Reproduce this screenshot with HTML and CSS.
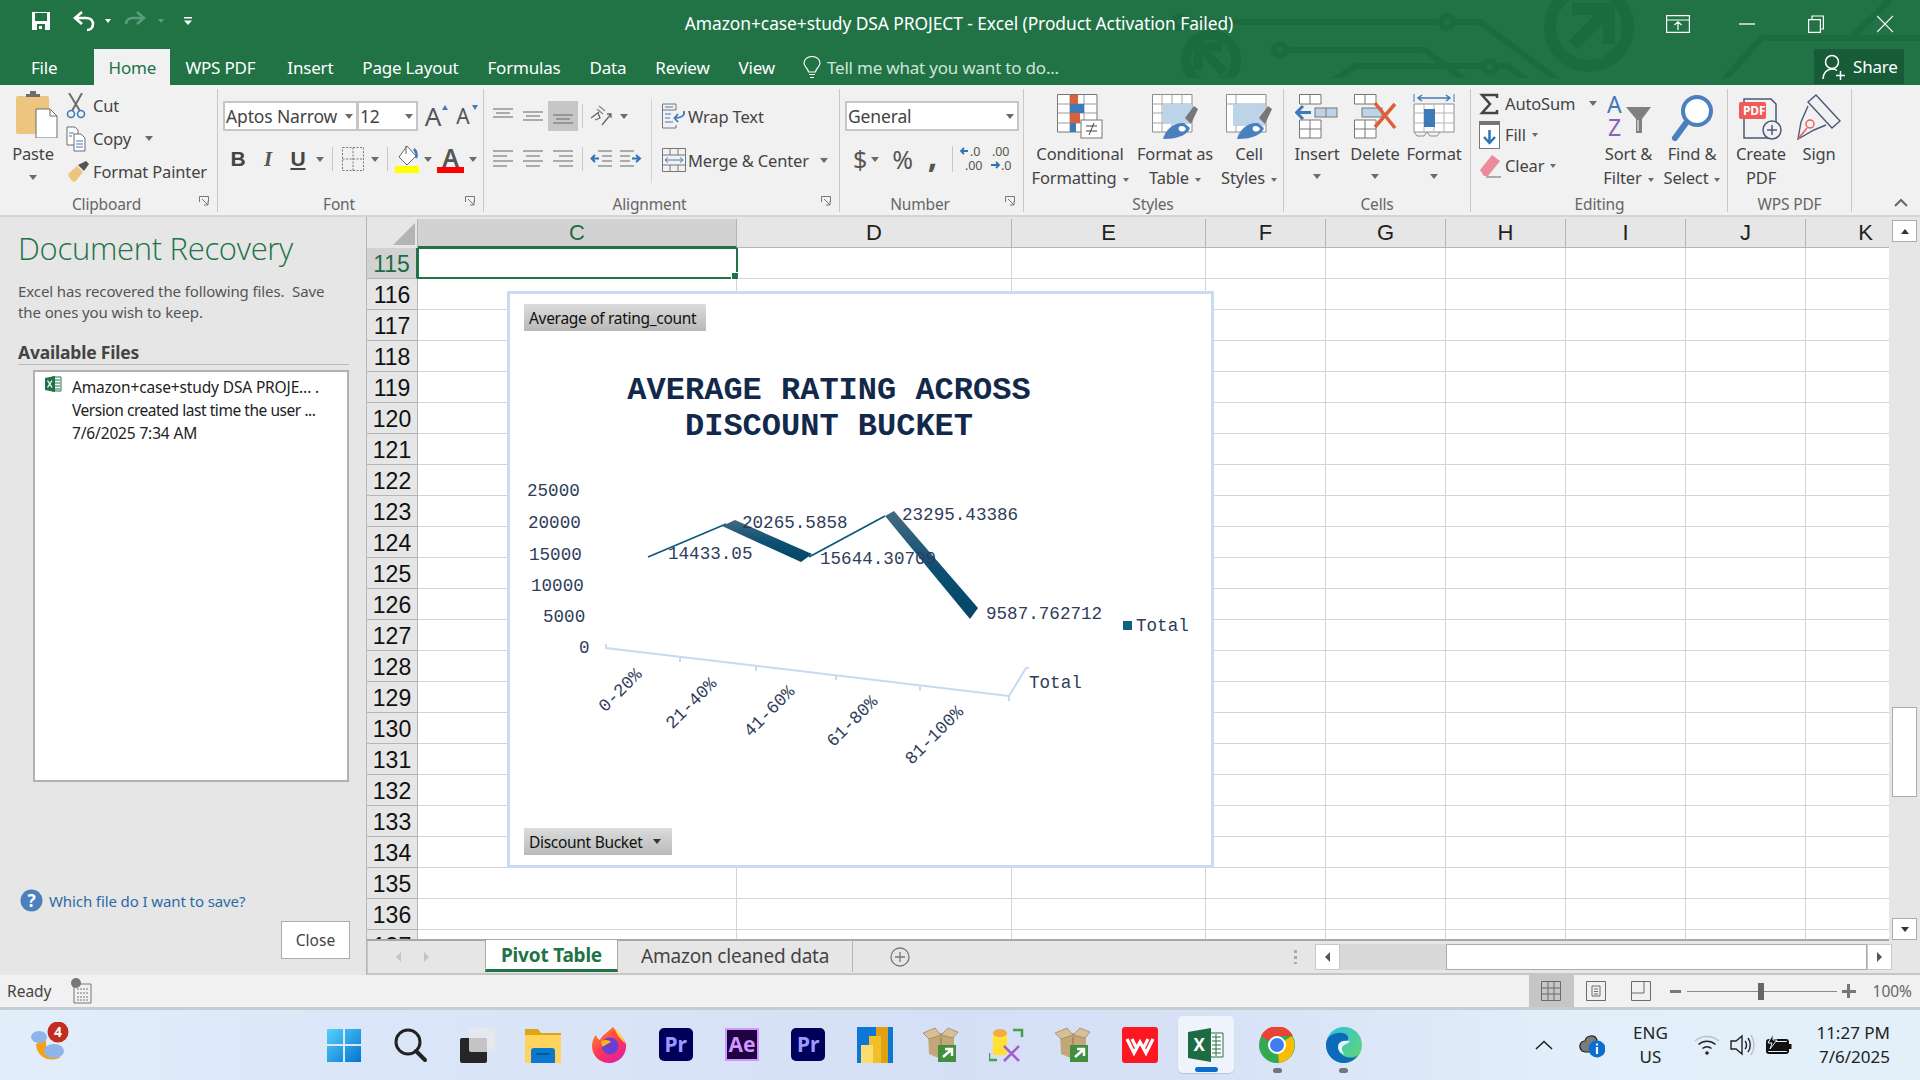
FILE: index.html
```html
<!DOCTYPE html>
<html lang="en">
<head>
<meta charset="utf-8">
<title>Amazon+case+study DSA PROJECT - Excel</title>
<link rel="stylesheet" href="styles.css">
</head>
<body>
<div class="app">
  <header class="head">
    <svg class="circuit" viewBox="0 0 1920 78" width="1920" height="78" fill="none" stroke="#1c6a40" stroke-width="6">
      <path d="M1188 22H1440M1455 22H1480L1563 84"/><circle cx="1447" cy="22" r="6"/><circle cx="1180" cy="22" r="6"/>
      <circle cx="1589" cy="27" r="39" stroke-width="12"/>
      <path d="M1573 45L1604 14M1572 9H1609V44" stroke-width="12"/>
      <path d="M1288 50H1425L1470 84"/><circle cx="1280" cy="50" r="6"/>
      <path d="M1328 84L1355 66H1484M1497 66H1507L1532 84"/><circle cx="1490" cy="67" r="6"/>
      <circle cx="1211" cy="60" r="25" stroke-width="10"/>
      <path d="M1224 72L1202 50M1198 70V47H1222" stroke-width="9"/>
      <path d="M1720 84L1762 38H1920M1851 38L1890 0"/>
    </svg>
    <div class="titlebar">
      <div class="qat">
        <svg width="20" height="20" viewBox="0 0 20 20"><path d="M1 1H19V19H1Z" fill="#fff"/><path d="M4 2H16V10H4ZM6 13H14V19H6Z" fill="#217346"/><path d="M8 15H11V18H8Z" fill="#fff"/></svg>
        <svg class="q-undo" width="24" height="22" viewBox="0 0 24 22" fill="none" stroke="#fff" stroke-width="2.6"><path d="M10 2L3 8L10 14M3 8H14C20 8 21 12 21 14C21 18 18 20 15 20"/></svg>
        <span class="caret white"></span>
        <svg class="q-redo" width="24" height="22" viewBox="0 0 24 22" fill="none" stroke="#5f9a7c" stroke-width="2.6"><path d="M14 2L21 8L14 14M21 8H10C4 8 3 12 3 14"/></svg>
        <span class="caret dim"></span>
        <svg class="q-cust" width="10" height="10" viewBox="0 0 10 10" fill="#fff"><path d="M1 1H9V2.4H1ZM1 4.5H9L5 9Z"/></svg>
      </div>
      <div class="doc-title">Amazon+case+study DSA PROJECT - Excel (Product Activation Failed)</div>
      <div class="winctl">
        <svg width="24" height="18" viewBox="0 0 24 18" fill="none" stroke="#fff" stroke-width="1.2"><path d="M.6.6H23.4V17.4H.6ZM.6 5H23.4M12 15V7M8.5 10L12 6.8L15.5 10"/></svg>
        <svg width="16" height="18" viewBox="0 0 16 18" stroke="#fff" stroke-width="1.3"><path d="M0 9H16"/></svg>
        <svg width="16" height="18" viewBox="0 0 16 18" fill="none" stroke="#fff" stroke-width="1.2"><path d="M.6 4.6H12.4V17.4H.6ZM4 4.6V1H15.4V14H12.4"/></svg>
        <svg width="16" height="18" viewBox="0 0 16 18" stroke="#fff" stroke-width="1.2"><path d="M0 1L16 17M16 1L0 17"/></svg>
      </div>
    </div>
    <nav class="tabs">
      <span class="tab t-file">File</span>
      <span class="tab t-home">Home</span>
      <span class="tab t-wps">WPS PDF</span>
      <span class="tab">Insert</span>
      <span class="tab">Page Layout</span>
      <span class="tab">Formulas</span>
      <span class="tab">Data</span>
      <span class="tab">Review</span>
      <span class="tab">View</span>
      <span class="tell">
        <svg width="18" height="23" viewBox="0 0 18 23" fill="none" stroke="#fff" stroke-width="1.2"><path d="M5.5 16C5 12 1 11 1 7A8 6.500 0 0 1 17 7C17 11 13 12 12.500 16ZM6 18.500H12M7 21.500H11"/></svg>
        <span>Tell me what you want to do...</span>
      </span>
      <span class="share">
        <svg width="24" height="28" viewBox="0 0 24 28" fill="none" stroke="#fff" stroke-width="1.5"><circle cx="10" cy="9" r="6.500"/><path d="M1 26C1 20 5 16 10 16C12 16 14 16.500 15 17.500M14 22.500H23M18.500 18V27"/></svg>
        <span>Share</span>
      </span>
    </nav>
  </header>

  <section class="ribbon">
    <div class="group g-clip">
      <div class="gbody">
        <div class="big paste">
          <div class="bicon"><svg width="42" height="47" viewBox="0 0 42 47"><rect x="0" y="5" width="33" height="38" rx="2" fill="#edc57e"/><path d="M10 6V3H14V0H20V3H24V6Z" fill="#6d6d6d"/><path d="M20 18H34L41 25V47H20Z" fill="#fff" stroke="#6d6d6d"/><path d="M34 18V25H41" fill="none" stroke="#6d6d6d"/></svg></div>
          <span class="blabel">Paste</span><span class="caret c-big"></span>
        </div>
        <div class="smalls">
          <div class="sm"><span class="si"><svg width="20" height="26" viewBox="0 0 20 26" fill="none"><path d="M3 0L14 18M16 0L6 18" stroke="#6e6e6e" stroke-width="2"/><circle cx="5" cy="21" r="3.500" stroke="#3f7ab8" stroke-width="1.6"/><circle cx="15" cy="21" r="3.500" stroke="#3f7ab8" stroke-width="1.6"/></svg></span>Cut</div>
          <div class="sm"><span class="si"><svg width="20" height="26" viewBox="0 0 20 26" fill="#fff" stroke="#6e6e6e"><path d="M1 1H9L12 4V19H1Z"/><path d="M8 8H15L19 12V25H8Z"/><path d="M3 7H8M3 10H6M10 15H17M10 18H17M10 21H17" stroke="#3f7ab8" fill="none"/></svg></span>Copy<span class="caret c-gap"></span></div>
          <div class="sm"><span class="si"><svg width="24" height="24" viewBox="0 0 24 24"><path d="M2 14L11 6L17 12L9 22C6 22 3 18 2 14Z" fill="#edc57e"/><path d="M12 5L18 11L23 4L20 1Z" fill="#555"/></svg></span>Format Painter</div>
        </div>
      </div>
      <div class="glabel">Clipboard</div>
      <svg class="launch" width="10" height="10" viewBox="0 0 10 10" fill="none" stroke="#777"><path d="M.5 6V.5H9.500V6"/><path d="M3 3L9 9M5 9H9V5"/></svg>
    </div>

    <div class="group g-font">
      <div class="gbody col">
        <div class="row r1">
          <div class="box b-name"><span>Aptos Narrow</span><span class="caret"></span></div>
          <div class="box b-size"><span>12</span><span class="caret"></span></div>
          <div class="tool t-a1"><span class="bigA">A</span><span class="tri up"></span></div>
          <div class="tool t-a2"><span class="smA">A</span><span class="tri down"></span></div>
        </div>
        <div class="row r2">
          <div class="tool"><b class="fb">B</b></div>
          <div class="tool"><i class="fi">I</i></div>
          <div class="tool"><span class="fu">U</span></div>
          <span class="cslot"><span class="caret"></span></span><span class="sepslot"></span>
          <div class="tool"><svg width="22" height="24" viewBox="0 0 22 24" fill="none" stroke="#777" stroke-dasharray="2 1.500"><path d="M.5.5H21.500V23.500H.5ZM11 .5V23.500M.5 12H21.500"/></svg></div>
          <span class="cslot"><span class="caret"></span></span><span class="sepslot"></span>
          <div class="tool t-fill"><svg width="24" height="28" viewBox="0 0 24 28"><path d="M12 1L21 11L12 20L4 12Z" fill="#fff" stroke="#666"/><path d="M11 1V9" stroke="#666"/><path d="M19 4C22 7 22 11 21 13" stroke="#3f7ab8" stroke-width="2.500" fill="none"/><rect y="21" width="24" height="7" fill="#ffff00"/></svg></div>
          <span class="cslot"><span class="caret"></span></span>
          <div class="tool t-fc"><span class="fc">A</span></div>
          <span class="cslot"><span class="caret"></span></span>
        </div>
      </div>
      <div class="glabel">Font</div>
      <svg class="launch" width="10" height="10" viewBox="0 0 10 10" fill="none" stroke="#777"><path d="M.5 6V.5H9.500V6"/><path d="M3 3L9 9M5 9H9V5"/></svg>
    </div>

    <div class="group g-align">
      <div class="gbody">
        <div class="col al-left">
          <div class="row r1">
            <div class="tool"><svg class="i20" viewBox="0 0 20 16" stroke="#666" stroke-width="1.200"><path d="M0 1H20M3 5H17M0 9H20"/></svg></div>
            <div class="tool"><svg class="i20" viewBox="0 0 20 16" stroke="#666" stroke-width="1.200"><path d="M0 4H20M3 8H17M0 12H20"/></svg></div>
            <div class="tool on"><svg class="i20" viewBox="0 0 20 16" stroke="#666" stroke-width="1.200"><path d="M0 7H20M3 11H17M0 15H20"/></svg></div>
            <span class="sepslot s8"></span>
            <div class="tool"><svg width="22" height="22" viewBox="0 0 22 22" fill="none" stroke="#666" stroke-width="1.300"><path d="M1 13L9 7M5 15L10 13L8 8M12 20L21 9M17 9H21V13"/><path d="M9 1L15 6M7 4L13 9" stroke="#888"/></svg></div>
            <span class="caret c-or"></span>
          </div>
          <div class="row r2">
            <div class="tool"><svg class="i20" viewBox="0 0 20 20" stroke="#666" stroke-width="1.200"><path d="M0 2H20M0 7H14M0 12H20M0 17H14"/></svg></div>
            <div class="tool"><svg class="i20" viewBox="0 0 20 20" stroke="#666" stroke-width="1.200"><path d="M0 2H20M3 7H17M0 12H20M3 17H17"/></svg></div>
            <div class="tool"><svg class="i20" viewBox="0 0 20 20" stroke="#666" stroke-width="1.200"><path d="M0 2H20M6 7H20M0 12H20M6 17H20"/></svg></div>
            <span class="sepslot s8"></span>
            <div class="tool"><svg width="22" height="20" viewBox="0 0 22 20" fill="none" stroke="#666" stroke-width="1.200"><path d="M8 2H22M12 7H22M12 12H22M8 17H22"/><path d="M9 9.500H2M5 6L1.500 9.500L5 13" stroke="#2f75b5" stroke-width="2"/></svg></div>
            <div class="tool"><svg width="22" height="20" viewBox="0 0 22 20" fill="none" stroke="#666" stroke-width="1.200"><path d="M0 2H14M0 7H10M0 12H10M0 17H14"/><path d="M12 9.500H20M16 6L20 9.500L16 13" stroke="#2f75b5" stroke-width="2"/></svg></div>
          </div>
        </div>
        <div class="col al-right">
          <div class="row r1 txt"><svg class="ai" width="24" height="26" viewBox="0 0 24 26" fill="none" stroke="#777"><path d="M.5 1H14V7H.5ZM.5 1V25H14V22"/><path d="M3 4H11M3 11H9M3 15H8M3 19H11" stroke="#3f7ab8"/><path d="M22 8C23 13 19 15 13 15M16 11L12.500 15L16 19" stroke="#3f7ab8" stroke-width="1.800"/></svg>Wrap Text</div>
          <div class="row r2 txt"><svg class="ai" width="24" height="24" viewBox="0 0 24 24" fill="none" stroke="#777"><path d="M.5.5H23.500V23.500H.5ZM.5 7H23.500M.5 17H23.500M8 .5V7M16 .5V7M8 17V23.500M16 17V23.500"/><path d="M3 12H21M6 9.500L3 12L6 14.500M18 9.500L21 12L18 14.500" stroke="#3f7ab8"/></svg>Merge &amp; Center<span class="caret c-merge"></span></div>
        </div>
      </div>
      <div class="glabel">Alignment</div>
      <svg class="launch" width="10" height="10" viewBox="0 0 10 10" fill="none" stroke="#777"><path d="M.5 6V.5H9.500V6"/><path d="M3 3L9 9M5 9H9V5"/></svg>
    </div>

    <div class="group g-num">
      <div class="gbody col">
        <div class="row r1"><div class="box b-gen"><span>General</span><span class="caret"></span></div></div>
        <div class="row r2 num-tools">
          <span class="nt dollar">$</span><span class="caret"></span>
          <span class="nt pct">%</span>
          <span class="nt comma">,</span>
          <span class="numsep"></span>
          <svg class="deci" width="28" height="32" viewBox="0 0 28 32"><path d="M8 9H1M4 6L1 9L4 12" stroke="#2f75b5" stroke-width="1.800" fill="none"/><text x="10" y="13.500" class="dec">.0</text><text x="5" y="27.500" class="dec">.00</text></svg>
          <svg class="deci dec2" width="28" height="32" viewBox="0 0 28 32"><text x="2" y="13.500" class="dec">.00</text><path d="M1 23H9M6 20L9 23L6 26" stroke="#2f75b5" stroke-width="1.800" fill="none"/><text x="11" y="27.500" class="dec">.0</text></svg>
        </div>
      </div>
      <div class="glabel">Number</div>
      <svg class="launch" width="10" height="10" viewBox="0 0 10 10" fill="none" stroke="#777"><path d="M.5 6V.5H9.500V6"/><path d="M3 3L9 9M5 9H9V5"/></svg>
    </div>

    <div class="group g-styles">
      <div class="gbody">
        <div class="big w96">
          <div class="bicon"><svg width="46" height="45" viewBox="0 0 46 45"><path d="M.5.5H40V38H.5Z" fill="#fff" stroke="#777"/><path d="M13 .5V38M27 .5V38M.5 10H40M.5 19H40M.5 29H40" stroke="#999"/><rect x="13" y="1" width="8" height="9" fill="#d9603b"/><rect x="13" y="10" width="14" height="9" fill="#3f7ab8"/><rect x="13" y="19" width="10" height="10" fill="#d9603b"/><rect x="13" y="29" width="6" height="9" fill="#3f7ab8"/><rect x="24" y="26" width="21" height="18" fill="#fff" stroke="#777"/><path d="M29 32H40M29 37H40M37 29L32 41" stroke="#444" fill="none"/></svg></div>
          <span class="blabel">Conditional</span><span class="blabel">Formatting<span class="caret c-in"></span></span>
        </div>
        <div class="big w94">
          <div class="bicon"><svg width="46" height="45" viewBox="0 0 46 45"><path d="M.5.5H40V38H.5Z" fill="#fff" stroke="#8c8c8c"/><path d="M.5 10H40M.5 19H40M.5 29H40M10 .5V38M20 .5V38M30 .5V38" stroke="#a5a5a5"/><rect x="11" y="10" width="29" height="20" fill="#bdd3e8"/><path d="M33 24L42 12L46 15L39 30Z" fill="#777"/><path d="M11 45C13 36 22 28 32 29L38 34C36 40 28 45 11 45Z" fill="#4a80bd"/><path d="M27 33C29 31 33 32 34 35C31 40 25 37 27 33Z" fill="#fff"/></svg></div>
          <span class="blabel">Format as</span><span class="blabel">Table<span class="caret c-in"></span></span>
        </div>
        <div class="big w54">
          <div class="bicon"><svg width="46" height="45" viewBox="0 0 46 45"><path d="M.5.5H40V38H.5Z" fill="#fff" stroke="#8c8c8c"/><path d="M.5 10H40M10 .5V38" stroke="#a5a5a5"/><rect x="7" y="10" width="32" height="22" fill="#bdd3e8"/><path d="M33 24L42 12L46 15L39 30Z" fill="#777"/><path d="M11 45C13 36 22 28 32 29L38 34C36 40 28 45 11 45Z" fill="#4a80bd"/><path d="M27 33C29 31 33 32 34 35C31 40 25 37 27 33Z" fill="#fff"/></svg></div>
          <span class="blabel">Cell</span><span class="blabel">Styles<span class="caret c-in"></span></span>
        </div>
      </div>
      <div class="glabel">Styles</div>
    </div>

    <div class="group g-cells">
      <div class="gbody">
        <div class="big w58">
          <div class="bicon"><svg width="44" height="45" viewBox="0 0 44 45" fill="none"><path d="M4.500.5H26V10H4.500ZM15 .5V10M4.500 26H26V44H4.500ZM15 26V44M4.500 35H26" stroke="#777" fill="#fff"/><rect x="20" y="14" width="22" height="9" fill="#bdd3e8" stroke="#777"/><path d="M31 14V23" stroke="#777"/><path d="M16 18.500H2M8 12L1.500 18.500L8 25" stroke="#3f7ab8" stroke-width="3"/></svg></div>
          <span class="blabel">Insert</span><span class="caret c-line"></span>
        </div>
        <div class="big w58">
          <div class="bicon"><svg width="44" height="45" viewBox="0 0 44 45" fill="none"><path d="M1.500.5H23V10H1.500ZM12 .5V10M1.500 26H23V44H1.500ZM12 26V44M1.500 35H23" stroke="#777" fill="#fff"/><rect x="9" y="14" width="20" height="9" fill="#bdd3e8" stroke="#777"/><path d="M22 9L42 34M42 10L22 33" stroke="#d9603b" stroke-width="3.500"/></svg></div>
          <span class="blabel">Delete</span><span class="caret c-line"></span>
        </div>
        <div class="big w60">
          <div class="bicon"><svg width="42" height="45" viewBox="0 0 42 45" fill="none"><path d="M1 0V8M41 0V8" stroke="#3f7ab8"/><path d="M5 4H37M9 1L5 4L9 7M33 1L37 4L33 7" stroke="#3f7ab8" stroke-width="1.500"/><path d="M1 10H41V38H1Z" fill="#fff" stroke="#8c8c8c"/><path d="M11 10V38M31 10V38M21 10V38M1 19H41M1 29H41" stroke="#b5b5b5"/><rect x="11" y="15" width="11" height="18" fill="#3f7ab8"/><path d="M1 38L4 42H11L14 38M14 38L17 42H24L27 38" stroke="#8c8c8c"/></svg></div>
          <span class="blabel">Format</span><span class="caret c-line"></span>
        </div>
      </div>
      <div class="glabel">Cells</div>
    </div>

    <div class="group g-edit">
      <div class="gbody">
        <div class="smalls ed">
          <div class="sm"><span class="si"><svg width="20" height="22" viewBox="0 0 20 22" fill="none" stroke="#444" stroke-width="2.500"><path d="M18 5V2H3L11 11L3 20H18V17"/></svg></span>AutoSum<span class="caret c-auto"></span></div>
          <div class="sm"><span class="si"><svg width="21" height="28" viewBox="0 0 21 28"><rect x=".5" y=".5" width="20" height="27" fill="#fff" stroke="#777"/><rect width="21" height="4" fill="#777"/><path d="M10.500 9V22M5 16L10.500 22L16 16" fill="none" stroke="#2f75b5" stroke-width="2.500"/></svg></span>Fill<span class="caret c-in"></span></div>
          <div class="sm"><span class="si"><svg width="22" height="24" viewBox="0 0 22 24"><path d="M1 16L13 1L21 7L9 22H5Z" fill="#ea8c9b"/><path d="M7 23H22" stroke="#666"/></svg></span>Clear<span class="caret c-in"></span></div>
        </div>
        <div class="big w65">
          <div class="bicon"><svg class="sorticon" width="44" height="58" viewBox="0 -7 44 58"><text x="0" y="19" class="az a">A</text><text x="1" y="42" class="az z">Z</text><path d="M19 13H44L35 25V39H29V25Z" fill="#808080"/><path d="M31 26V37" stroke="#fff"/></svg></div>
          <span class="blabel">Sort &amp;</span><span class="blabel">Filter<span class="caret c-in"></span></span>
        </div>
        <div class="big w62">
          <div class="bicon"><svg width="42" height="48" viewBox="0 0 42 48" fill="none"><circle cx="26" cy="17" r="14" stroke="#4a80bd" stroke-width="4" fill="#fff"/><path d="M15 29L4 44" stroke="#4a80bd" stroke-width="6" stroke-linecap="round"/></svg></div>
          <span class="blabel">Find &amp;</span><span class="blabel">Select<span class="caret c-in"></span></span>
        </div>
      </div>
      <div class="glabel">Editing</div>
    </div>

    <div class="group g-wps">
      <div class="gbody">
        <div class="big w58">
          <div class="bicon"><svg width="44" height="46" viewBox="0 0 44 46" fill="none"><path d="M5 5H32L37 10V44H5Z" stroke="#4a5a78" stroke-width="1.500"/><rect x="0" y="8" width="27" height="17" rx="2" fill="#ee5b5b"/><text x="4" y="21" class="pdf">PDF</text><circle cx="33" cy="36" r="9" fill="#f1f1f1" stroke="#4a5a78" stroke-width="1.500"/><path d="M28 36H38M33 31V41" stroke="#4a5a78" stroke-width="1.500"/></svg></div>
          <span class="blabel">Create</span><span class="blabel">PDF</span>
        </div>
        <div class="big w58">
          <div class="bicon"><svg width="44" height="46" viewBox="0 0 44 46" fill="none" stroke="#4a5a78" stroke-width="1.400"><path d="M19 1L43 27L35 34L11 8ZM11 12L4 28L1 45L17 36L29 31"/><path d="M1 45L10 34" stroke="#e85a5a"/><circle cx="13" cy="30" r="4" stroke="#e85a5a"/></svg></div>
          <span class="blabel">Sign</span>
        </div>
      </div>
      <div class="glabel">WPS PDF</div>
    </div>
    <div class="collapse"><svg width="16" height="10" viewBox="0 0 16 10" fill="none" stroke="#666" stroke-width="2"><path d="M2 9L8 3L14 9"/></svg></div>
  </section>

  <main class="main">
    <aside class="pane">
      <h1>Document Recovery</h1>
      <p>Excel has recovered the following files.&nbsp; Save<br>the ones you wish to keep.</p>
      <h2>Available Files</h2>
      <div class="files">
        <svg width="17" height="16" viewBox="0 0 17 16"><path d="M7 1H16V15H7Z" fill="#fff" stroke="#217346"/><path d="M9 4H15M9 7H15M9 10H15M9 13H15" stroke="#217346"/><path d="M0 2L10 0V16L0 14Z" fill="#217346"/><path d="M2.500 4.500L7 11.500M7 4.500L2.500 11.500" stroke="#fff" stroke-width="1.300"/></svg>
        <div class="file-text"><div>Amazon+case+study DSA PROJE... .</div><div class="fl2">Version created last time the user ...</div><div>7/6/2025 7:34 AM</div></div>
      </div>
      <div class="help"><svg width="23" height="23" viewBox="0 0 23 23"><circle cx="11.500" cy="11.500" r="11" fill="#4a80bd"/><text x="11.500" y="18" text-anchor="middle" class="q">?</text></svg><span>Which file do I want to save?</span></div>
      <div class="close-btn">Close</div>
    </aside>

    <div class="work">
      <div class="sheet-row">
        <div class="sheet">
          <div class="colhead">
            <div class="corner"><span></span></div>
            <div class="ch c1 sel">C</div><div class="ch c2">D</div><div class="ch c3">E</div><div class="ch c4">F</div><div class="ch c4">G</div><div class="ch c4">H</div><div class="ch c4">I</div><div class="ch c4">J</div><div class="ch c4">K</div>
          </div>
          <div class="rows">
            <div class="r"><div class="rh sel">115</div><div class="cells"><div class="active"></div></div></div>
            <div class="r"><div class="rh">116</div><div class="cells"></div></div>
            <div class="r"><div class="rh">117</div><div class="cells"></div></div>
            <div class="r"><div class="rh">118</div><div class="cells"></div></div>
            <div class="r"><div class="rh">119</div><div class="cells"></div></div>
            <div class="r"><div class="rh">120</div><div class="cells"></div></div>
            <div class="r"><div class="rh">121</div><div class="cells"></div></div>
            <div class="r"><div class="rh">122</div><div class="cells"></div></div>
            <div class="r"><div class="rh">123</div><div class="cells"></div></div>
            <div class="r"><div class="rh">124</div><div class="cells"></div></div>
            <div class="r"><div class="rh">125</div><div class="cells"></div></div>
            <div class="r"><div class="rh">126</div><div class="cells"></div></div>
            <div class="r"><div class="rh">127</div><div class="cells"></div></div>
            <div class="r"><div class="rh">128</div><div class="cells"></div></div>
            <div class="r"><div class="rh">129</div><div class="cells"></div></div>
            <div class="r"><div class="rh">130</div><div class="cells"></div></div>
            <div class="r"><div class="rh">131</div><div class="cells"></div></div>
            <div class="r"><div class="rh">132</div><div class="cells"></div></div>
            <div class="r"><div class="rh">133</div><div class="cells"></div></div>
            <div class="r"><div class="rh">134</div><div class="cells"></div></div>
            <div class="r"><div class="rh">135</div><div class="cells"></div></div>
            <div class="r"><div class="rh">136</div><div class="cells"></div></div>
            <div class="r"><div class="rh">137</div><div class="cells"></div></div>
          </div>
          <div class="chart">
            <svg class="plot" viewBox="505 288 711 582" width="711" height="582">
              <defs>
                <linearGradient id="rib" x1="0" y1="0" x2="0" y2="1"><stop offset="0" stop-color="#456a83"/><stop offset=".55" stop-color="#0b4f72"/><stop offset="1" stop-color="#044766"/></linearGradient>
              </defs>
              <text class="ct" x="829" y="399" text-anchor="middle">AVERAGE RATING ACROSS</text>
              <text class="ct" x="829" y="435" text-anchor="middle">DISCOUNT BUCKET</text>
              <g class="ax">
                <text x="527" y="496">25000</text><text x="528" y="528">20000</text><text x="529" y="560">15000</text><text x="531" y="591">10000</text><text x="543" y="622">5000</text><text x="579" y="653">0</text>
              </g>
              <path d="M648 557L726 524" stroke="#0e5a7c" stroke-width="1.800" fill="none"/>
              <path d="M809 557L885 516" stroke="#0e5a7c" stroke-width="1.800" fill="none"/>
              <path d="M722 526L735 520L812 554L801 562Z" fill="url(#rib)"/>
              <path d="M885 516L894 511L978 608L970 619Z" fill="url(#rib)"/>
              <g class="ax">
                <text x="742" y="528">20265.5858</text><text x="668" y="559">14433.05</text><text x="820" y="564">15644.30709</text><text x="902" y="520">23295.43386</text><text x="986" y="619">9587.762712</text><text x="1136" y="631">Total</text><text x="1029" y="688">Total</text>
              </g>
              <rect x="1123" y="621" width="9" height="9" fill="#125f85"/>
              <path d="M606 644V648L1009 696M680 657V662M756 666V671M836 675V680M920 686V691M1009 696V701M1009 696L1026 668H1029" stroke="#c6daf1" stroke-width="2" fill="none"/>
              <g class="ax rot">
                <text transform="translate(624 694) rotate(-45)" text-anchor="middle">0-20%</text>
                <text transform="translate(695 707) rotate(-45)" text-anchor="middle">21-40%</text>
                <text transform="translate(773 715) rotate(-45)" text-anchor="middle">41-60%</text>
                <text transform="translate(856 725) rotate(-45)" text-anchor="middle">61-80%</text>
                <text transform="translate(938 739) rotate(-45)" text-anchor="middle">81-100%</text>
              </g>
            </svg>
            <div class="fbtn f-avg">Average of rating_count</div>
            <div class="fbtn">Discount Bucket<span class="caret c-fb"></span></div>
          </div>
        </div>
        <div class="vscroll">
          <div class="sb-btn"><span class="caret up"></span></div>
          <div class="sb-track"><div class="sb-thumb"></div></div>
          <div class="sb-btn"><span class="caret"></span></div>
        </div>
      </div>
      <div class="sheetbar">
        <span class="nav"><span class="tri-l"></span><span class="tri-r"></span></span>
        <span class="stab on">Pivot Table</span>
        <span class="stab">Amazon cleaned data</span>
        <svg class="plus" width="20" height="20" viewBox="0 0 20 20" fill="none" stroke="#777" stroke-width="1.300"><circle cx="10" cy="10" r="9"/><path d="M5 10H15M10 5V15"/></svg>
        <span class="dots"></span>
        <div class="hscroll">
          <div class="sb-h"><span class="tri-l dark"></span></div>
          <div class="h-track"></div>
          <div class="h-thumb"></div>
          <div class="sb-h"><span class="tri-r dark"></span></div>
        </div>
      </div>
    </div>
  </main>

  <footer class="status">
    <span class="ready">Ready</span>
    <svg class="macro" width="22" height="26" viewBox="0 0 22 26" fill="none" stroke="#777"><path d="M4 6H21V25H4Z"/><path d="M7 11H18M7 15H18M7 19H18M7 22H18" stroke-dasharray="2 1"/><circle cx="6" cy="5" r="5" fill="#777" stroke="none"/></svg>
    <div class="views">
      <span class="vw on"><svg width="20" height="20" viewBox="0 0 20 20" fill="none" stroke="#6b6b6b"><path d="M.5.5H19.500V19.500H.5ZM7 .5V19.500M13 .5V19.500M.5 7H19.500M.5 13H19.500"/></svg></span>
      <span class="vw"><svg width="20" height="20" viewBox="0 0 20 20" fill="none" stroke="#6b6b6b"><path d="M.5.5H19.500V19.500H.5ZM6 5H14V15H6ZM8 8H12M8 10.500H12M8 13H12"/></svg></span>
      <span class="vw"><svg width="20" height="20" viewBox="0 0 20 20" fill="none" stroke="#6b6b6b"><path d="M.5.5H19.500V19.500H.5ZM.5 12H13V.5"/></svg></span>
    </div>
    <div class="zoom">
      <span class="zm"></span>
      <span class="slider"><span class="knob"></span></span>
      <span class="zp"></span>
      <span class="pct100">100%</span>
    </div>
  </footer>

  <div class="taskbar">
    <div class="weather">
      <svg width="44" height="42" viewBox="0 0 44 42"><path d="M7 22C7 34 20 42 32 35C22 34 16 29 17 18Z" fill="#f3a31b"/><ellipse cx="10" cy="15" rx="8" ry="6" fill="#8fb4ea"/><ellipse cx="25" cy="29" rx="10" ry="7" fill="#8fb4ea"/><circle cx="29" cy="10" r="10.500" fill="#c12d1e"/><text x="29" y="15" text-anchor="middle" class="badge">4</text></svg>
    </div>
    <div class="apps">
      <span class="ti"><svg width="36" height="36" viewBox="0 0 36 36"><defs><linearGradient id="w" x1="0" y1="0" x2="1" y2="1"><stop offset="0" stop-color="#56d0fb"/><stop offset="1" stop-color="#0474d0"/></linearGradient></defs><path d="M1 2H17V17H1ZM19 2H35V17H19ZM1 19H17V35H1ZM19 19H35V35H19Z" fill="url(#w)"/></svg></span>
      <span class="ti"><svg width="36" height="36" viewBox="0 0 36 36" fill="none" stroke="#222" stroke-width="3"><circle cx="16" cy="15" r="12"/><path d="M24 24L33 33" stroke-width="4" stroke-linecap="round"/></svg></span>
      <span class="ti"><svg width="36" height="36" viewBox="0 0 36 36"><rect x="1" y="11" width="27" height="25" rx="2" fill="#262626"/><rect x="10" y="1" width="26" height="24" rx="2" fill="#e8e8ea" fill-opacity=".82"/></svg></span>
      <span class="ti"><svg width="38" height="36" viewBox="0 0 38 36"><path d="M1 2H14L17 6H37V36H1Z" fill="#e0a416"/><path d="M1 8H37V36H1Z" fill="#fed45f"/><path d="M7 24Q7 21 10 21H28Q31 21 31 24V36H7Z" fill="#0a78cc"/><path d="M12 27H26" stroke="#054f90" stroke-width="1.500"/></svg></span>
      <span class="ti"><svg width="36" height="38" viewBox="0 0 36 38"><defs><linearGradient id="ff" x1="0" y1="0" x2=".6" y2="1"><stop offset="0" stop-color="#ff9a1f"/><stop offset=".6" stop-color="#ff3750"/><stop offset="1" stop-color="#e6219a"/></linearGradient></defs><path d="M22 1C24 5 31 9 35 18C36 29 28 37 18 37C8 37 1 29 1 20C1 15 3 11 5 9C6 12 7 13 9 14C11 9 16 7 22 1Z" fill="url(#ff)"/><path d="M24 2C27 6 33 11 34 18C32 14 26 12 24 2Z" fill="#ffd43a"/><circle cx="19" cy="20" r="8.500" fill="#6b3fd4"/><path d="M10 15C14 13 19 14 20 16L11 21Z" fill="#ffb01f"/></svg></span>
      <span class="ti"><span class="adobe pr">Pr</span></span>
      <span class="ti"><span class="adobe ae">Ae</span></span>
      <span class="ti"><span class="adobe pr">Pr</span></span>
      <span class="ti"><svg width="36" height="36" viewBox="0 0 36 36"><rect width="36" height="36" fill="#0a78d4"/><rect x="19" width="12" height="36" fill="#e0a010"/><rect x="31" width="5" height="36" fill="#0a78d4"/><rect x="12" y="9" width="12" height="27" fill="#f1bf2a"/><rect x="4" y="18" width="12" height="18" fill="#fbdd6d"/></svg></span>
      <span class="ti"><svg width="36" height="36" viewBox="0 0 36 36"><path d="M5 6H31V28L18 32L6 27Z" fill="#c4a778"/><path d="M18 10V32" stroke="#8a7350"/><path d="M0 6L12 1L18 8L6 12ZM18 8L25 1L35 5L30 11Z" fill="#d9bf95" stroke="#8a7350" stroke-width=".6"/><rect x="15" y="18" width="18" height="17" fill="#3f8f3f"/><path d="M20 30L28 23M22 22H29V29" stroke="#fff" stroke-width="2.500" fill="none"/></svg></span>
      <span class="ti"><svg width="36" height="36" viewBox="0 0 36 36"><path d="M4 6H18V28H4Z" fill="#ffe033"/><ellipse cx="11" cy="6" rx="7" ry="4" fill="#f2ab4a"/><path d="M24 3H33V10M0 26V33H8" fill="none" stroke="#46a046" stroke-width="2.500"/><path d="M15 19L30 34M30 19L15 34" stroke="#a45dd1" stroke-width="2.500"/></svg></span>
      <span class="ti"><svg width="36" height="36" viewBox="0 0 36 36"><path d="M5 6H31V28L18 32L6 27Z" fill="#c4a778"/><path d="M18 10V32" stroke="#8a7350"/><path d="M0 6L12 1L18 8L6 12ZM18 8L25 1L35 5L30 11Z" fill="#d9bf95" stroke="#8a7350" stroke-width=".6"/><rect x="15" y="18" width="18" height="17" fill="#3f8f3f"/><path d="M20 30L28 23M22 22H29V29" stroke="#fff" stroke-width="2.500" fill="none"/></svg></span>
      <span class="ti"><svg width="36" height="36" viewBox="0 0 36 36"><rect width="36" height="36" rx="3" fill="#fc1723"/><path d="M5 12L12 26L18 15L24 26L31 12M10 12L14 20M26 12L22 20" stroke="#fff" stroke-width="3.200" fill="none"/></svg></span>
      <span class="ti active-app"><svg width="36" height="34" viewBox="0 0 36 34"><path d="M22 5H35V29H22Z" fill="#fff" stroke="#217346"/><path d="M24 9H33M24 13H33M24 17H33M24 21H33M24 25H33M28 6V28" stroke="#217346"/><path d="M0 4L23 0V34L0 30Z" fill="#1d6b41"/><text x="5.500" y="23" class="xl">X</text></svg><span class="pill"></span></span>
      <span class="ti dotted t-chrome"><svg width="36" height="36" viewBox="0 0 36 36"><circle cx="18" cy="18" r="18" fill="#34a853"/><path d="M18 18L33 9A18 18 0 0 1 20 36Z" fill="#fbbc04"/><path d="M2 9A18 18 0 0 1 34 9H18A9 9 0 0 0 10 14Z" fill="#ea4335"/><circle cx="18" cy="18" r="9" fill="#fff"/><circle cx="18" cy="18" r="7" fill="#3f7ef0"/></svg><span class="dot"></span></span>
      <span class="ti dotted"><svg width="36" height="36" viewBox="0 0 36 36"><defs><linearGradient id="eg" x1="0" y1="0" x2="1" y2="1"><stop offset="0" stop-color="#2fc0e0"/><stop offset="1" stop-color="#62d96b"/></linearGradient></defs><circle cx="18" cy="18" r="18" fill="url(#eg)"/><path d="M0 18C0 8 10 5 16 6C26 7 22 17 18 17C13 17 11 22 15 27C19 31 27 32 32 28C28 34 22 36 18 36C8 36 0 28 0 18Z" fill="#0c6bb8"/><path d="M12 20C12 14 18 13 24 14C22 17 19 17 17 19C15 21 16 25 19 27C15 27 12 24 12 20Z" fill="#e8f2fb"/></svg><span class="dot"></span></span>
    </div>
    <div class="tray">
      <svg class="tr-caret" width="18" height="10" viewBox="0 0 18 10" fill="none" stroke="#222" stroke-width="1.600"><path d="M1 9L9 1.500L17 9"/></svg>
      <svg class="tr-cloud" width="26" height="26" viewBox="0 0 26 26"><path d="M3 19C-1 15 1 9 6 9C7 3 16 2 18 8L12 20H6Z" fill="#7b7b7b" stroke="#222" stroke-width="1.200"/><circle cx="18" cy="17" r="8.500" fill="#0a6ed1"/><path d="M18 15V22M18 11.500V13.500" stroke="#fff" stroke-width="2.200"/></svg>
      <div class="lang">ENG<br>US</div>
      <svg class="tr-wifi" width="26" height="22" viewBox="0 0 26 22" fill="none" stroke="#222" stroke-width="1.500"><path d="M1 7A18 18 0 0 1 25 7" stroke="#b8c2cc"/><path d="M4.500 10.500A13 13 0 0 1 21.500 10.500M8.500 14.500A7 7 0 0 1 17.500 14.500"/><circle cx="13" cy="19" r="1.800" fill="#222" stroke="none"/></svg>
      <svg class="tr-vol" width="26" height="22" viewBox="0 0 26 22" fill="none" stroke="#222" stroke-width="1.400"><path d="M1 7H6L12 2V20L6 15H1ZM15 7C17 9 17 13 15 15M18 4C21 8 21 14 18 18"/><path d="M21 1C25 7 25 15 21 21" stroke="#b8c2cc"/></svg>
      <svg class="tr-bat" width="26" height="22" viewBox="0 0 26 22"><rect x="1" y="6" width="21" height="13" rx="2" fill="none" stroke="#111" stroke-width="2"/><rect x="2" y="8" width="19" height="9" fill="#111"/><rect x="22.500" y="10" width="3" height="5" fill="#111"/><path d="M7 0L2 9H6L4 15L11 6H7Z" fill="#111" stroke="#e2edf8"/></svg>
      <div class="clock">11:27 PM<br>7/6/2025</div>
    </div>
  </div>
</div>
</body>
</html>
```

FILE: styles.css
```css
* { box-sizing: border-box; }
html, body { margin: 0; padding: 0; }
body { font-family: "Noto Sans", "Open Sans", sans-serif; color: #444; overflow: hidden; background: #fff; }
.app { width: 1920px; height: 1080px; display: flex; flex-direction: column; overflow: hidden; }
svg { display: block; flex: none; }

/* carets */
.caret { display: inline-block; flex: none; width: 0; height: 0; border-left: 4.5px solid transparent; border-right: 4.5px solid transparent; border-top: 5px solid #6b6b6b; }
.caret.up { border-top: 0; border-bottom: 5px solid #6b6b6b; }
.caret.white { border-top-color: #fff; border-left-width: 3.5px; border-right-width: 3.5px; border-top-width: 4px; }
.caret.dim { border-top-color: #5f9a7c; border-left-width: 3.5px; border-right-width: 3.5px; border-top-width: 4px; }

/* head */
.head { height: 85px; background: #217346; position: relative; color: #fff; }
.circuit { position: absolute; left: 0; top: 0; }
.titlebar { height: 49px; display: grid; grid-template-columns: 1fr auto 1fr; align-items: start; position: relative; }
.qat { display: flex; align-items: center; padding: 0 0 0 31px; height: 42px; }
.q-undo { margin-left: 21px; }
.qat .caret.white { margin-left: 9px; }
.q-redo { margin-left: 12px; }
.qat .caret.dim { margin-left: 11px; }
.q-cust { margin-left: 19px; }
.doc-title { font-size: 17.400px; letter-spacing: -.07px; line-height: 47px; margin-left: -2px; }
.winctl { display: flex; justify-content: flex-end; align-items: center; height: 47px; padding-right: 27px; gap: 53px; }
.winctl svg:first-child { margin-right: -4px; }
.tabs { height: 36px; display: flex; align-items: stretch; position: relative; font-size: 17px; letter-spacing: -.2px; padding-left: 31px; }
.tab { display: flex; align-items: center; margin-right: 29px; line-height: 35px; }
.t-file { margin-right: 37px; }
.t-home { background: #f1f1f1; color: #217346; margin-right: 15px; width: 76px; justify-content: center; }
.t-wps { margin-right: 32px; }
.tell { display: flex; align-items: center; margin-left: -1px; gap: 6px; color: #cde6d8; }
.share { position: absolute; left: 1814px; top: 0; width: 90px; height: 35px; background: #185c37; display: flex; align-items: center; gap: 7px; padding-left: 8px; color: #fff; }

/* ribbon */
.ribbon { height: 132px; background: #f1f1f1; border-bottom: 2px solid #d4d4d4; display: flex; padding-top: 4px; position: relative; }
.group { position: relative; height: 123px; display: flex; flex-direction: column; border-right: 1px solid #c8c8c8; font-size: 16.500px; letter-spacing: -.15px; }
.g-clip { width: 218px; }
.g-font { width: 266px; padding-left: 5px; }
.g-align { width: 356px; padding-left: 4px; }
.g-num { width: 184px; padding-left: 5px; }
.g-styles { width: 260px; padding-left: 8px; }
.g-cells { width: 187px; padding-left: 4px; }
.g-edit { width: 257px; padding-left: 5px; }
.g-wps { width: 124px; padding-left: 4px; }
.gbody { height: 105px; display: flex; flex: none; }
.gbody.col, .col { display: flex; flex-direction: column; }
.glabel { text-align: center; font-size: 15.500px; color: #666; line-height: 20px; margin-left: -4px; }
.g-font .glabel, .g-align .glabel, .g-num .glabel { padding-right: 24px; }
.g-styles .glabel { padding-right: 5px; }
.launch { position: absolute; right: 8px; bottom: 6px; }
.big { display: flex; flex-direction: column; align-items: center; flex: none; }
.bicon { height: 53px; padding-top: 5px; display: flex; justify-content: center; }
.sorticon { margin-top: -7px; }
.blabel { line-height: 24px; white-space: nowrap; }
.paste { width: 66px; }
.paste .bicon { padding-top: 2px; margin-left: 7px; }
.c-big { margin-top: 9px; }
.c-line { margin-top: 8px; }
.c-in { margin-left: 6px; vertical-align: 2px; border-left-width: 3.500px; border-right-width: 3.500px; border-top-width: 4px; }
.c-gap { margin-left: 14px; }
.w96 { width: 96px; } .w94 { width: 94px; } .w54 { width: 54px; } .w58 { width: 58px; } .w60 { width: 60px; } .w65 { width: 65px; } .w62 { width: 62px; }
.smalls { display: flex; flex-direction: column; }
.sm { height: 33px; display: flex; align-items: center; white-space: nowrap; }
.si { width: 27px; flex: none; display: flex; }
.smalls.ed { width: 120px; padding: 0 0 0 3px; margin-top: -1px; }
.ed .si { width: 26px; }
.ed .sm { height: 31px; }
.c-auto { margin-left: 14px; }
.row { display: flex; align-items: center; }
.r1 { height: 30px; margin-top: 12px; }
.r2 { height: 30px; margin-top: 13px; }
.tool { width: 30px; height: 30px; display: flex; align-items: center; justify-content: center; flex: none; position: relative; }
.tool.on { background: #c6c6c6; }
.i20 { width: 20px; height: 20px; }
.box { height: 30px; background: #fff; border: 2px solid #c6c6c6; display: flex; align-items: center; justify-content: space-between; padding: 0 3px 0 1px; font-size: 17.500px; color: #444; }
.b-name { width: 135px; }
.b-size { width: 61px; margin-left: -1px; }
.b-gen { width: 174px; }
.bigA { font-size: 26px; color: #555; line-height: 1; }
.smA { font-size: 21px; color: #555; line-height: 1; }
.tri { position: absolute; width: 0; height: 0; border-left: 3.500px solid transparent; border-right: 3.500px solid transparent; }
.tri.up { border-bottom: 5px solid #3f7ab8; right: 0; top: 4px; }
.tri.down { border-top: 5px solid #3f7ab8; right: 0; top: 4px; }
.fb { font-size: 21px; color: #444; font-family: "Liberation Sans", sans-serif; }
.fi { font-size: 21px; color: #555; font-family: "Liberation Serif", serif; font-weight: bold; }
.fu { font-size: 21px; color: #444; font-weight: 700; text-decoration: underline; text-underline-offset: 2px; font-family: "Liberation Sans", sans-serif; }
.cslot { width: 14px; display: flex; justify-content: center; flex: none; }
.sepslot { width: 11px; height: 24px; flex: none; position: relative; }
.sepslot::after { content: ""; position: absolute; left: 5px; top: 0; bottom: 0; width: 1px; background: #c8c8c8; }
.s8 { width: 8px; }
.s8::after { left: 4px; }
.t-fill { width: 28px; }
.t-fc { width: 31px; }
.fc { font-size: 25px; line-height: 25px; color: #555; border-bottom: 6px solid #f00; padding: 0 5px; height: 28px; display: block; font-weight: 600; }
.al-left { width: 164px; border-right: 1px solid #d4d4d4; height: 84px; margin-top: 10px; }
.al-left .r1 { margin-top: 2px; }
.al-right { padding-left: 8px; }
.c-or { margin-left: 4px; }
.txt { gap: 2px; white-space: nowrap; }
.ai { margin-left: 2px; }
.al-right .r1 { margin-top: 12px; }
.al-right .r2 { margin-top: 14px; }
.c-merge { margin-left: 9px; }
.num-tools { position: relative; }
.nt { color: #555; flex: none; }
.dollar { font-size: 25px; margin-left: 8px; margin-right: 4px; line-height: 30px; }
.pct { font-size: 25px; margin-left: 13px; line-height: 30px; }
.comma { font-size: 34px; font-weight: 700; line-height: 22px; margin-left: 15px; height: 22px; align-self: flex-start; }
.numsep { width: 1px; height: 26px; background: #c8c8c8; margin: 0 7px 0 15px; }
.deci { margin-top: -2px; }
.dec2 { margin-left: 2px; }
.dec { font-size: 12.500px; fill: #555; font-family: "Noto Sans", sans-serif; }
.az { font-size: 23px; font-family: "Noto Sans", sans-serif; }
.a { fill: #3f7ab8; }
.z { fill: #8c5fb8; }
.pdf { font: 700 12px "Noto Sans", sans-serif; fill: #fff; }
.collapse { position: absolute; right: 11px; bottom: 8px; }

/* main */
.main { height: 758px; display: flex; background: #e6e6e6; }
.pane { width: 367px; flex: none; display: flex; flex-direction: column; padding: 10px 17px 0 18px; border-right: 1px solid #b5b5b5; }
.pane h1 { margin: 0; font-size: 31px; font-weight: 300; color: #217346; line-height: 42px; letter-spacing: -.3px; font-family: "Open Sans", sans-serif; }
.pane p { margin: 12px 0 0; font-size: 15px; line-height: 21px; color: #555; letter-spacing: -.1px; }
.pane h2 { margin: 17px 0 0; font-size: 17.500px; line-height: 24px; font-weight: 700; color: #444; border-bottom: 1px solid #b8b8b8; height: 25px; letter-spacing: -.2px; }
.files { margin: 5px 0 0 15px; height: 412px; background: #fff; border: 2px solid #b1b1b1; position: relative; padding: 4px 0 0 37px; }
.files svg { position: absolute; left: 10px; top: 4px; }
.file-text { font-size: 15.500px; line-height: 23px; color: #222; white-space: nowrap; letter-spacing: -.15px; }
.fl2 { letter-spacing: -.45px; }
.help { display: flex; align-items: center; gap: 6px; margin: 107px 0 0 2px; font-size: 15px; color: #2b6aa6; letter-spacing: -.1px; }
.q { font: 700 17px "Noto Sans", sans-serif; fill: #fff; }
.close-btn { align-self: flex-end; width: 69px; height: 38px; margin: 9px -1px 0 0; background: #fff; border: 1px solid #ababab; display: flex; align-items: center; justify-content: center; font-size: 15.500px; color: #444; }
.work { flex: 1; display: flex; flex-direction: column; min-width: 0; }
.sheet-row { height: 724px; display: flex; }
.sheet { width: 1522px; position: relative; overflow: hidden; background: #fff; display: flex; flex-direction: column; border-bottom: 2px solid #a8a8a8; }
.colhead { height: 31px; flex: none; display: flex; padding-top: 2px; background: #e6e6e6; }
.corner { width: 51px; flex: none; position: relative; border-right: 1px solid #b5b5b5; }
.corner span { position: absolute; right: 2px; bottom: 3px; width: 0; height: 0; border-left: 22px solid transparent; border-bottom: 22px solid #b4b4b4; }
.ch { flex: none; border-right: 1px solid #b5b5b5; border-bottom: 1px solid #b5b5b5; text-align: center; font: 22px/28px "Liberation Sans", sans-serif; color: #222; }
.ch.sel { background: #d2d2d2; color: #1d6b41; border-bottom: 2px solid #217346; }
.c1 { width: 319px; } .c2 { width: 275px; } .c3 { width: 194px; } .c4 { width: 120px; }
.rows { flex: 1; overflow: hidden; }
.r { height: 31px; display: flex; }
.rh { width: 51px; flex: none; background: #e6e6e6; border-right: 1px solid #b5b5b5; border-bottom: 1px solid #b5b5b5; text-align: center; font: 23px/31px "Liberation Sans", sans-serif; color: #111; padding-top: 1px; }
.rh.sel { background: #d2d2d2; color: #1d6b41; border-right: 2px solid #217346; }
.cells { flex: 1; position: relative; border-bottom: 1px solid #d4d4d4;
  background-image: linear-gradient(#d4d4d4,#d4d4d4), linear-gradient(#d4d4d4,#d4d4d4), linear-gradient(#d4d4d4,#d4d4d4), linear-gradient(#d4d4d4,#d4d4d4), linear-gradient(#d4d4d4,#d4d4d4), linear-gradient(#d4d4d4,#d4d4d4), linear-gradient(#d4d4d4,#d4d4d4), linear-gradient(#d4d4d4,#d4d4d4);
  background-size: 1px 100%; background-repeat: no-repeat;
  background-position: 318px 0, 593px 0, 787px 0, 907px 0, 1027px 0, 1147px 0, 1267px 0, 1387px 0; }
.active { position: absolute; left: -1px; top: -1px; width: 321px; height: 32px; border: 2px solid #217346; }
.active::after { content: ""; position: absolute; right: -3px; bottom: -3px; width: 6px; height: 6px; background: #217346; border: 1px solid #fff; }
.chart { position: absolute; left: 140px; top: 74px; width: 707px; height: 577px; background: #fff; border: 3px solid #c9dcf1; display: flex; flex-direction: column; justify-content: space-between; align-items: flex-start; padding: 10px 14px; }
.plot { position: absolute; left: -5px; top: -6px; }
.ct { font: 700 32px "Liberation Mono", monospace; fill: #13294b; }
.ax text { font: 17.600px "Liberation Mono", monospace; fill: #2e3d5a; }
.fbtn { position: relative; height: 27px; background: linear-gradient(#dcdcdc, #b9b9b9); color: #111; font-size: 15.500px; letter-spacing: -.3px; display: flex; align-items: center; padding: 0 5px; white-space: nowrap; }
.f-avg { padding-right: 10px; }
.c-fb { margin-left: 10px; margin-right: 6px; border-top-color: #333; }
.vscroll { width: 31px; flex: none; display: flex; flex-direction: column; align-items: center; padding: 3px 0 1px; background: #e6e6e6; }
.sb-btn { width: 25px; height: 22px; background: #fff; border: 1px solid #ababab; display: flex; align-items: center; justify-content: center; flex: none; }
.sb-btn .caret { border-top-color: #333; }
.sb-btn .caret.up { border-bottom-color: #333; }
.sb-track { flex: 1; width: 25px; position: relative; }
.sb-thumb { position: absolute; left: 0; top: 465px; width: 25px; height: 90px; background: #fff; border: 1px solid #ababab; }
.sheetbar { height: 34px; display: flex; align-items: center; position: relative; background: #e6e6e6; border-bottom: 2px solid #c6c6c6; }
.nav { width: 118px; display: flex; gap: 23px; padding-left: 28px; border-left: 1px solid #c8c8c8; height: 100%; align-items: center; }
.tri-l, .tri-r { display: inline-block; width: 0; height: 0; border-top: 5px solid transparent; border-bottom: 5px solid transparent; }
.tri-l { border-right: 5px solid #c4c4c4; }
.tri-r { border-left: 5px solid #c4c4c4; }
.tri-l.dark { border-right-color: #555; }
.tri-r.dark { border-left-color: #555; }
.stab { height: 100%; display: flex; align-items: center; padding: 0 23px; font-size: 19px; letter-spacing: -.2px; color: #444; border-right: 1px solid #b5b5b5; margin-bottom: 2px; }
.stab.on { background: #fff; color: #217346; font-weight: 700; padding: 0 8px; border-left: 1px solid #a8a8a8; border-right: 1px solid #a8a8a8; border-bottom: 3px solid #217346; width: 133px; justify-content: center; white-space: nowrap; }
.plus { margin-left: 37px; }
.dots { width: 3px; height: 14px; margin-left: 384px; background: repeating-linear-gradient(#aaa 0 3px, transparent 3px 6px); }
.hscroll { position: absolute; left: 948px; top: 3px; width: 577px; height: 26px; display: flex; }
.sb-h { width: 25px; background: #fff; border: 1px solid #c8c8c8; display: flex; align-items: center; justify-content: center; flex: none; }
.h-track { width: 106px; background: #d8d8d8; }
.h-thumb { flex: 1; background: #fff; border: 1px solid #ababab; }

/* status */
.status { height: 35px; background: #f1f1f1; display: flex; align-items: center; position: relative; border-bottom: 3px solid #c6ccd4; padding-left: 7px; }
.ready { font-size: 15.500px; color: #444; }
.macro { margin-left: 18px; }
.views { margin-left: auto; display: flex; height: 100%; }
.vw { width: 45px; display: flex; align-items: center; justify-content: center; }
.vw.on { background: #c6c6c6; }
.zoom { display: flex; align-items: center; margin-left: 6px; padding-right: 8px; height: 100%; }
.zm { width: 11px; height: 3px; background: #777; }
.slider { width: 150px; height: 1px; background: #8a8a8a; margin: 0 6px 0 6px; position: relative; }
.knob { position: absolute; left: 71px; top: -8px; width: 6px; height: 17px; background: #666; }
.zp { width: 14px; height: 14px; margin-left: -1px; background: linear-gradient(#777,#777) center/14px 3px no-repeat, linear-gradient(#777,#777) center/3px 14px no-repeat; }
.pct100 { font-size: 15.500px; color: #666; margin-left: 17px; }

/* taskbar */
.taskbar { flex: 1; display: flex; align-items: center; position: relative; background: linear-gradient(90deg, #e2eefa 0%, #dbe7f8 18%, #d5dff5 50%, #d6e1f6 62%, #e2eef9 82%, #e3eff9 100%); }
.weather { width: 311px; flex: none; padding-left: 29px; margin-top: -4px; }
.apps { display: flex; align-items: center; margin-top: -1px; }
.ti { width: 66.300px; height: 57px; display: flex; align-items: center; justify-content: center; position: relative; flex: none; }
.t-chrome { margin-left: 5px; }
.active-app::before { content: ""; position: absolute; left: 5px; right: 5px; top: 0; bottom: 0; background: rgba(245,248,253,.75); border-radius: 5px; box-shadow: 0 1px 1px rgba(120,140,180,.35); }
.active-app svg { position: relative; }
.pill { position: absolute; left: 22px; bottom: 1px; width: 23px; height: 5px; border-radius: 3px; background: #0a6ed1; }
.dot { position: absolute; left: 29px; bottom: 0; width: 9px; height: 5px; border-radius: 3px; background: #6f7680; }
.adobe { width: 34px; height: 33px; border-radius: 5px; background: #00005b; color: #9999ff; font: 700 21px/33px "Noto Sans", sans-serif; text-align: center; }
.adobe.ae { border-radius: 0; background: #1f0040; color: #cf96fd; border: 2px solid #cf96fd; line-height: 29px; }
.badge { font: 700 14px "Noto Sans", sans-serif; fill: #fff; }
.xl { font: 700 17px "Noto Sans", sans-serif; fill: #fff; }
.tray { margin-left: auto; display: flex; align-items: center; height: 100%; padding-right: 30px; color: #222; font-size: 17px; }
.tr-cloud { margin-left: 26px; }
.lang { width: 50px; margin-left: 20px; text-align: center; line-height: 24px; }
.tr-wifi { margin-left: 19px; }
.tr-vol { margin-left: 10px; }
.tr-bat { margin-left: 10px; }
.clock { margin-left: 24px; text-align: right; line-height: 24px; white-space: nowrap; }
```
